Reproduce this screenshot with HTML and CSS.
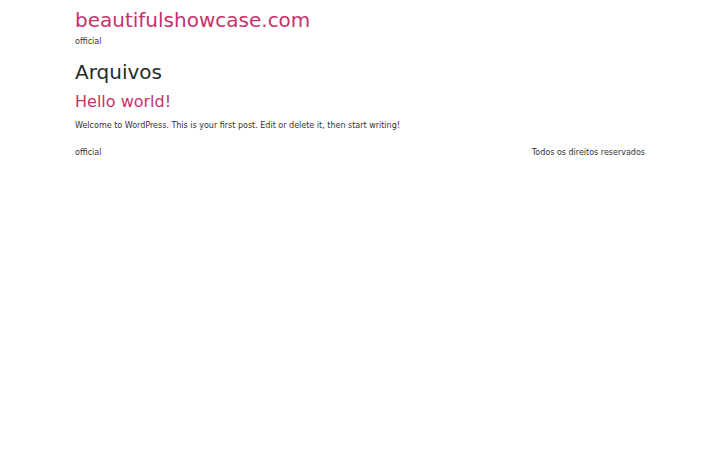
FILE: index.html
```html
<!DOCTYPE html>
<html lang="pt">
<head>
<meta charset="utf-8">
<title>Arquivos - beautifulshowcase.com</title>
<link rel="stylesheet" href="styles.css">
</head>
<body>
<div class="container">
  <header class="site-header">
    <a class="site-title" href="#">beautifulshowcase.com</a>
    <p class="site-desc">official</p>
  </header>
  <main>
    <h1 class="page-title">Arquivos</h1>
    <article>
      <h2 class="entry-title"><a href="#">Hello world!</a></h2>
      <p class="entry-text">Welcome to WordPress. This is your first post. Edit or delete it, then start writing!</p>
    </article>
  </main>
  <footer class="site-footer">
    <span>official</span>
    <span>Todos os direitos reservados</span>
  </footer>
</div>
</body>
</html>
```
FILE: styles.css
```css
html, body { margin: 0; padding: 0; background: #fff; }
body { font-family: "DejaVu Sans", sans-serif; color: #333; font-size: 8px; }
.container { width: 570px; margin: 0 auto; padding-top: 6px; }
.site-title { display: block; font-size: 20px; line-height: 28px; color: #c7326b; text-decoration: none; }
.site-desc { margin: 1px 0 0; line-height: 14px; }
.page-title { font-size: 20px; font-weight: normal; line-height: 28px; margin: 9px 0 0; color: #2b2b2b; }
.entry-title { font-size: 16px; font-weight: normal; line-height: 24px; margin: 4px 0 0; }
.entry-title a { color: #c7326b; text-decoration: none; }
.entry-text { margin: 5px 0 0; line-height: 14px; }
.site-footer { display: flex; justify-content: space-between; margin-top: 13px; line-height: 14px; }
```
